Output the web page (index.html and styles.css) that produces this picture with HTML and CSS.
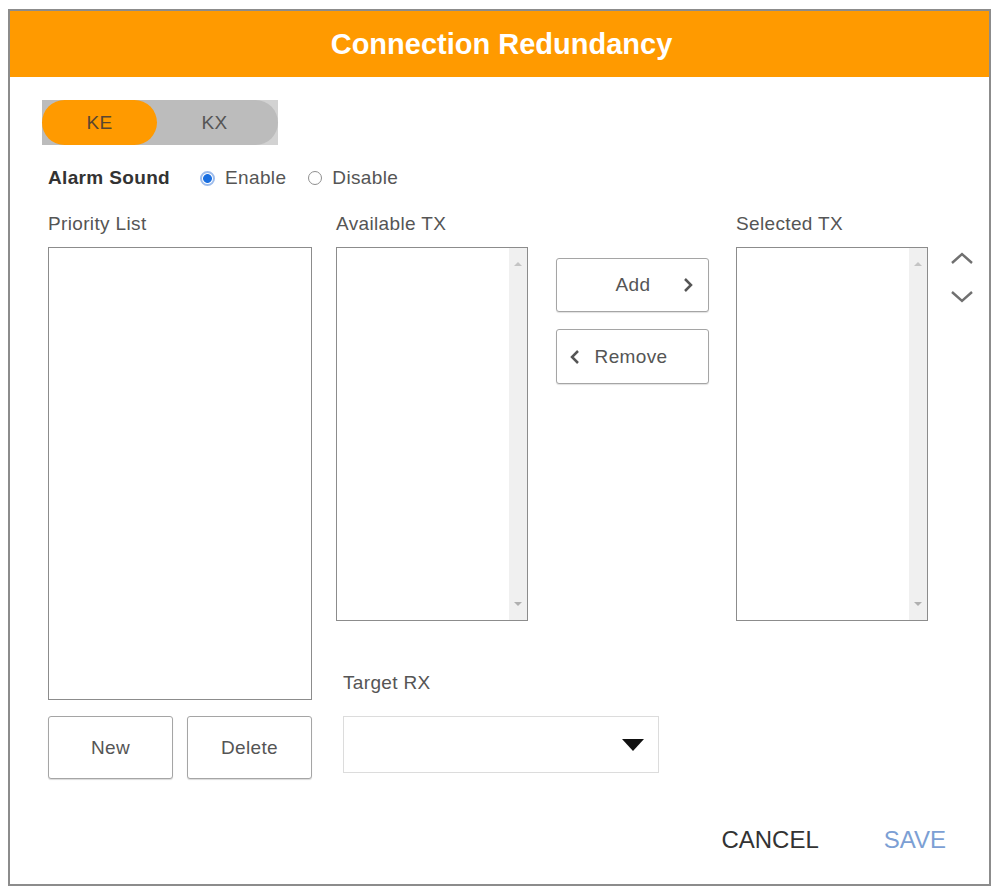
FILE: index.html
```html
<!DOCTYPE html>
<html>
<head>
    <title>Connection Redundancy</title>
    <link rel="stylesheet" href="styles.css">
</head>
<body>
    <div class="dialog">
        <div class="dialog-header">Connection Redundancy</div>

        <div class="dialog-body">
            <div class="segmented">
                <div class="segmented-track">
                    <div class="segment segment-active">KE</div>
                    <div class="segment">KX</div>
                </div>
            </div>

            <div class="alarm-row">
                <span class="alarm-label">Alarm Sound</span>
                <label class="radio"><span class="radio-dot radio-checked"></span>Enable</label>
                <label class="radio"><span class="radio-dot"></span>Disable</label>
            </div>

            <div class="main">
                <!-- priority list -->
                <div class="priority-col">
                    <div class="field-label">Priority List</div>
                    <div class="list-box priority-box"></div>
                    <div class="priority-actions">
                        <button class="btn btn-square">New</button>
                        <button class="btn btn-square">Delete</button>
                    </div>
                </div>

                <div class="transfer-col">
                    <div class="transfer-row">
                        <div class="tx-col">
                            <div class="field-label">Available TX</div>
                            <div class="list-box tx-box">
                                <div class="scrollbar">
                                    <span class="scroll-arrow scroll-up"></span>
                                    <span class="scroll-arrow scroll-down"></span>
                                </div>
                            </div>
                        </div>

                        <div class="move-col">
                            <button class="btn btn-move btn-add">
                                <span></span>
                                <span>Add</span>
                                <svg class="chev" width="10" height="16" viewBox="0 0 10 16"><path d="M2 2 L8 8 L2 14" fill="none" stroke="#555" stroke-width="2.5"/></svg>
                            </button>
                            <button class="btn btn-move btn-remove">
                                <svg class="chev" width="10" height="16" viewBox="0 0 10 16"><path d="M8 2 L2 8 L8 14" fill="none" stroke="#555" stroke-width="2.5"/></svg>
                                <span>Remove</span>
                                <span></span>
                            </button>
                        </div>

                        <div class="tx-col selected-col">
                            <div class="field-label">Selected TX</div>
                            <div class="list-box tx-box">
                                <div class="scrollbar">
                                    <span class="scroll-arrow scroll-up"></span>
                                    <span class="scroll-arrow scroll-down"></span>
                                </div>
                            </div>
                        </div>

                        <div class="order-col">
                            <svg width="26" height="14" viewBox="0 0 26 14"><path d="M3 12 L13 3 L23 12" fill="none" stroke="#707070" stroke-width="2.4"/></svg>
                            <svg width="26" height="14" viewBox="0 0 26 14"><path d="M3 2 L13 11 L23 2" fill="none" stroke="#707070" stroke-width="2.4"/></svg>
                        </div>
                    </div>

                    <div class="target">
                        <div class="field-label target-label">Target RX</div>
                        <div class="select">
                            <svg width="24" height="14" viewBox="0 0 24 14"><polygon points="1,1 23,1 12,13" fill="#111"/></svg>
                        </div>
                    </div>
                </div>
            </div>
        </div>

        <div class="dialog-footer">
            <button class="text-btn">CANCEL</button>
            <button class="text-btn text-btn-primary">SAVE</button>
        </div>
    </div>
</body>
</html>
```

FILE: styles.css
```css
body {
    margin: 0;
    background-color: #fff;
    font-family: "Liberation Sans", Arial, sans-serif;
    color: #555;
}

.dialog {
    margin: 9px 0 0 8px;
    width: 983px;
    height: 877px;
    border: 2px solid #8c8c8c;
    box-sizing: border-box;
    display: flex;
    flex-direction: column;
    background-color: #fff;
}

.dialog-header {
    height: 66px;
    background-color: #ff9a00;
    color: #fff;
    font-weight: bold;
    font-size: 29px;
    display: flex;
    align-items: center;
    justify-content: center;
    padding-left: 4px;
}

.dialog-body {
    padding: 23px 0 0 38px;
    letter-spacing: 0.35px;
}

/* KE / KX switch */
.segmented {
    width: 236px;
    height: 45px;
    margin-left: -6px;
    background-color: #d2d2d2;
}

.segmented-track {
    display: flex;
    height: 100%;
    background-color: #bcbcbc;
    border-radius: 0 23px 23px 0;
}

.segment {
    flex: 1;
    display: flex;
    align-items: center;
    justify-content: center;
    font-size: 19px;
    color: #555;
    padding-right: 6px;
}

.segment-active {
    flex: 0 0 115px;
    background-color: #ff9a00;
    border-radius: 23px;
    padding-right: 0;
    color: #5a4630;
}

.alarm-row {
    display: flex;
    align-items: center;
    height: 22px;
    margin-top: 22px;
    font-size: 19px;
}

.alarm-label {
    font-weight: bold;
    color: #333;
    margin-right: 30px;
}

.radio {
    display: flex;
    align-items: center;
    gap: 10px;
    margin-right: 22px;
    color: #555;
}

.radio-dot {
    width: 14px;
    height: 14px;
    border: 1px solid #8f8f8f;
    border-radius: 50%;
    box-sizing: border-box;
    background-color: #fff;
}

.radio-checked {
    border: 2px solid #9dbcec;
    background: radial-gradient(circle, #1a6fe0 0 4px, #fff 4.8px);
    width: 15px;
    height: 15px;
}

.main {
    display: flex;
    margin-top: 24px;
}

.field-label {
    font-size: 19px;
    line-height: 22px;
    height: 22px;
    margin-bottom: 12px;
    color: #555;
}

.priority-col {
    width: 264px;
    margin-right: 24px;
}

.list-box {
    border: 1px solid #8c8c8c;
    box-sizing: border-box;
    background-color: #fff;
    display: flex;
    justify-content: flex-end;
}

.priority-box {
    height: 453px;
}

.priority-actions {
    display: flex;
    gap: 14px;
    margin-top: 16px;
}

.btn {
    font-family: inherit;
    font-size: 19px;
    letter-spacing: 0.35px;
    color: #555;
    background-color: #fff;
    border: 1px solid #a5a5a5;
    border-radius: 3px;
    box-sizing: border-box;
    padding: 0;
}

.btn-square {
    width: 125px;
    height: 63px;
    box-shadow: 0 1px 1px rgba(0,0,0,0.15);
}

.transfer-col {
    display: flex;
    flex-direction: column;
}

.transfer-row {
    display: flex;
}

.tx-col {
    width: 192px;
}

.tx-box {
    height: 374px;
}

.scrollbar {
    width: 18px;
    background-color: #f0f0f0;
    display: flex;
    flex-direction: column;
    justify-content: space-between;
    align-items: center;
    padding: 14px 0 14px;
}

.scroll-arrow {
    width: 0;
    height: 0;
    border-left: 4px solid transparent;
    border-right: 4px solid transparent;
}

.scroll-up {
    border-bottom: 4px solid #c4c4c4;
}

.scroll-down {
    border-top: 4px solid #b0b0b0;
}

.move-col {
    display: flex;
    flex-direction: column;
    gap: 17px;
    margin: 45px 0 0 28px;
}

.btn-move {
    width: 153px;
    height: 55px;
    display: grid;
    grid-template-columns: 1fr auto 1fr;
    align-items: center;
    box-shadow: 0 1px 1px rgba(0,0,0,0.12);
}

.btn-add {
    height: 54px;
    padding: 0 15px 0 16px;
}

.btn-add .chev {
    justify-self: end;
}

.btn-remove {
    padding: 0 16px 0 13px;
}

.btn-remove .chev {
    justify-self: start;
}

.selected-col {
    margin-left: 27px;
}

.order-col {
    display: flex;
    flex-direction: column;
    gap: 25px;
    margin: 38px 0 0 21px;
}

.target {
    margin: 51px 0 0 7px;
}

.target-label {
    margin-bottom: 22px;
}

.select {
    width: 316px;
    height: 57px;
    border: 1px solid #dcdcdc;
    box-sizing: border-box;
    display: flex;
    align-items: center;
    justify-content: flex-end;
    padding-right: 13px;
}

.dialog-footer {
    margin-top: auto;
    display: flex;
    justify-content: flex-end;
    gap: 65px;
    padding: 0 43px 30px 0;
}

.text-btn {
    font-family: inherit;
    font-size: 24px;
    line-height: 28px;
    background: none;
    border: none;
    padding: 0;
    color: #333;
}

.text-btn-primary {
    color: #7c9fd4;
}
```
